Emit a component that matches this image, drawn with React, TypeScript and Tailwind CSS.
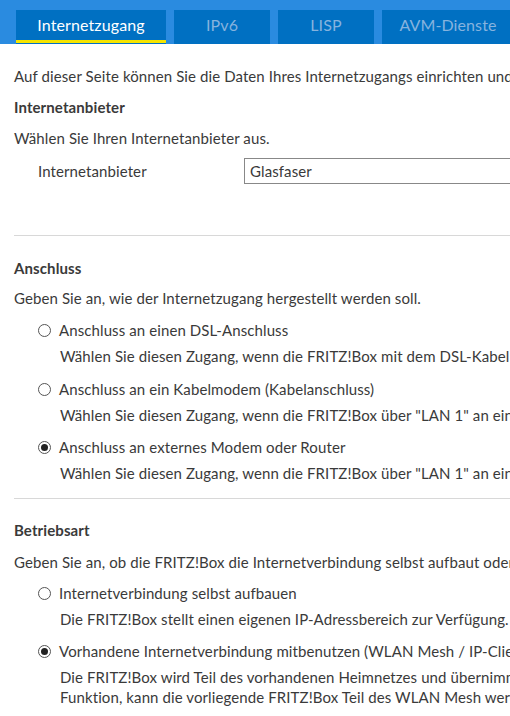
const font = { fontFamily: 'Lato, "Noto Sans", sans-serif' };

function Radio({ checked }: { checked?: boolean }) {
  return (
    <span className="mr-[8px] flex h-[13px] w-[13px] shrink-0 items-center justify-center rounded-full border border-[#555] bg-white">
      {checked && <span className="h-[7px] w-[7px] rounded-full bg-[#222]" />}
    </span>
  );
}

function Option({
  label,
  desc,
  checked,
  className,
}: {
  label: string;
  desc: string[];
  checked?: boolean;
  className?: string;
}) {
  return (
    <div className={className}>
      <div className="ml-6 flex h-5 items-center">
        <Radio checked={checked} />
        <span>{label}</span>
      </div>
      <div className="ml-[46px] mt-[6px]">
        {desc.map((line) => (
          <div key={line} className="h-5">
            {line}
          </div>
        ))}
      </div>
    </div>
  );
}

const tabs = [
  { name: 'Internetzugang', width: 'w-[150px]', active: true },
  { name: 'IPv6', width: 'w-[96px]' },
  { name: 'LISP', width: 'w-[96px]' },
  { name: 'AVM-Dienste', width: 'w-[132px]' },
];

export default function App() {
  return (
    <div
      className="h-[716px] w-[510px] overflow-hidden bg-white text-[15px] leading-5 tracking-[0.1px] whitespace-nowrap text-[#3a3a3a]"
      style={font}
    >
      <div className="flex h-[44px] gap-2 bg-[#2a8be0] pl-4 pt-[10px]">
        {tabs.map((t) => (
          <div
            key={t.name}
            className={`${t.width} relative flex shrink-0 items-center justify-center bg-[#0070c2] pb-1 text-[16px] ${
              t.active ? 'text-white' : 'text-[#86b3de]'
            }`}
          >
            {t.name}
            {t.active && <span className="absolute bottom-[1px] left-0 h-[3px] w-full bg-[#f5e400]" />}
          </div>
        ))}
      </div>

      <div className="w-[900px] px-[14px]">
        <p className="mt-[22px]">
          Auf dieser Seite können Sie die Daten Ihres Internetzugangs einrichten und ändern.
        </p>
        <h2 className="mt-[11px] font-bold">Internetanbieter</h2>
        <p className="mt-[11px]">Wählen Sie Ihren Internetanbieter aus.</p>
        <div className="mt-[10px] flex h-[26px] items-center">
          <span className="ml-6 w-[206px]">Internetanbieter</span>
          <div className="flex h-[26px] w-[400px] items-center border border-[#888] px-[5px]">
            Glasfaser
          </div>
        </div>

        <hr className="mt-[51px] border-t border-[#d8d8d8]" />

        <h2 className="mt-[22px] font-bold">Anschluss</h2>
        <p className="mt-[10px]">Geben Sie an, wie der Internetzugang hergestellt werden soll.</p>
        <Option
          className="mt-[12px]"
          label="Anschluss an einen DSL-Anschluss"
          desc={['Wählen Sie diesen Zugang, wenn die FRITZ!Box mit dem DSL-Kabel mit Ihrem DSL-Anschluss verbunden ist.']}
        />
        <Option
          className="mt-[13px]"
          label="Anschluss an ein Kabelmodem (Kabelanschluss)"
          desc={['Wählen Sie diesen Zugang, wenn die FRITZ!Box über "LAN 1" an ein Kabelmodem angeschlossen ist.']}
        />
        <Option
          className="mt-[12px]"
          checked
          label="Anschluss an externes Modem oder Router"
          desc={['Wählen Sie diesen Zugang, wenn die FRITZ!Box über "LAN 1" an ein bereits vorhandenes Modem oder einen Router angeschlossen ist.']}
        />

        <hr className="mt-[15px] border-t border-[#d8d8d8]" />

        <h2 className="mt-[21px] font-bold">Betriebsart</h2>
        <p className="mt-[12px]">
          Geben Sie an, ob die FRITZ!Box die Internetverbindung selbst aufbaut oder eine vorhandene Verbindung mitbenutzt.
        </p>
        <Option
          className="mt-[11px]"
          label="Internetverbindung selbst aufbauen"
          desc={['Die FRITZ!Box stellt einen eigenen IP-Adressbereich zur Verfügung. Die Geräte im Heimnetz erhalten ihre IP-Adresse von der FRITZ!Box.']}
        />
        <Option
          className="mt-[12px]"
          checked
          label="Vorhandene Internetverbindung mitbenutzen (WLAN Mesh / IP-Client-Modus)"
          desc={[
            'Die FRITZ!Box wird Teil des vorhandenen Heimnetzes und übernimmt die IP-Einstellungen. Verfügt der Router über die Mesh-',
            'Funktion, kann die vorliegende FRITZ!Box Teil des WLAN Mesh werden.',
          ]}
        />
      </div>
    </div>
  );
}
